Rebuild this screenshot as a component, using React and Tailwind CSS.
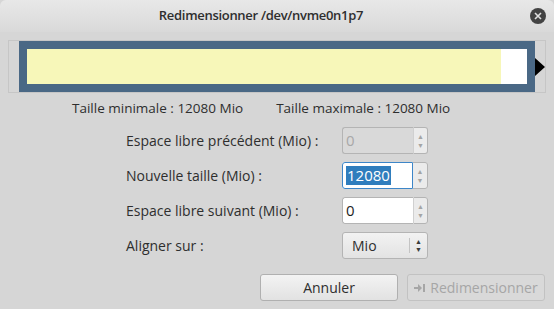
import React from "react";

function SpinBox({ value, disabled, focused, selected }) {
  return (
    <div className={`flex h-[27px] w-[86px] rounded-[3px] ${disabled ? "bg-[#d9d9d9]" : "bg-white"}`}>
      <div
        className={`flex flex-1 items-center rounded-l-[3px] border pl-[3px] ${
          focused ? "border-[#3d86c8]" : "border-[#b4b4b4] border-r-0"
        }`}
      >
        <span
          className={`text-[15px] leading-[19px] ${
            selected ? "bg-[#2f7dbd] px-[1px] text-white" : disabled ? "text-[#a8a8a8]" : "text-[#1e1e1e]"
          }`}
        >
          {value}
        </span>
      </div>
      <div
        className={`flex w-[15px] flex-col items-center justify-center rounded-r-[3px] border border-[#b4b4b4] bg-[#ebebeb] text-[7px] leading-[9px] text-[#a4a4a4] ${
          focused ? "border-l-0" : "border-l-[#d0d0d0]"
        }`}
      >
        <span>▲</span>
        <span>▼</span>
      </div>
    </div>
  );
}

export default function App() {
  return (
    <div
      className="flex h-[309px] w-[554px] flex-col bg-[#d6d6d6] text-[#2e2e2e]"
      style={{ fontFamily: '"Open Sans", "Noto Sans", sans-serif' }}
    >
      {/* title bar */}
      <div className="relative flex h-[32px] items-center justify-center rounded-t-[6px] bg-gradient-to-b from-[#e8e8e8] to-[#d9d9d9] pr-[32px]">
        <span className="text-[13px] font-semibold tracking-[-0.3px] text-[#2e2e2e]">Redimensionner /dev/nvme0n1p7</span>
        <div className="absolute right-[8px] top-[8px] flex h-[16px] w-[16px] items-center justify-center rounded-full bg-[#434343]">
          <svg width="8" height="8" viewBox="0 0 8 8">
            <path d="M1 1L7 7M7 1L1 7" stroke="#e0e0e0" strokeWidth="1.6" />
          </svg>
        </div>
      </div>

      {/* partition graph */}
      <div className="mx-[8px] mt-[8px] flex h-[53px] items-center border border-[#c6c6c6] pl-[10px]">
        <div className="flex h-[51px] w-[516px] bg-[#4a6885] p-[8px]">
          <div className="flex-1 bg-[#f7f7b9]" />
          <div className="w-[26px] bg-white" />
        </div>
        <svg width="10" height="18" viewBox="0 0 10 18">
          <path d="M0 0L10 9L0 18Z" fill="#000" />
        </svg>
      </div>

      <div className="mt-[6px] flex gap-[33px] pl-[72px] text-[13.5px] leading-[18px]">
        <span>Taille minimale : 12080 Mio</span>
        <span>Taille maximale : 12080 Mio</span>
      </div>

      {/* fields */}
      <div className="mt-[10px] flex flex-col gap-[8px] pl-[126px] text-[14px]">
        <div className="flex items-center">
          <span className="w-[216px]">Espace libre précédent (Mio) :</span>
          <SpinBox value="0" disabled />
        </div>
        <div className="flex items-center">
          <span className="w-[216px]">Nouvelle taille (Mio) :</span>
          <SpinBox value="12080" focused selected />
        </div>
        <div className="flex items-center">
          <span className="w-[216px]">Espace libre suivant (Mio) :</span>
          <SpinBox value="0" />
        </div>
        <div className="flex items-center">
          <span className="w-[216px]">Aligner sur :</span>
          <div className="flex h-[27px] w-[86px] rounded-[3px] border border-[#b4b4b4] bg-gradient-to-b from-[#f2f2f2] to-[#e3e3e3]">
            <div className="flex flex-1 items-center pl-[9px] text-[14px]">Mio</div>
            <div className="my-[5px] border-l border-[#c4c4c4]" />
            <div className="flex w-[17px] flex-col items-center justify-center text-[7px] leading-[8px] text-[#3a3a3a]">
              <span>▲</span>
              <span>▼</span>
            </div>
          </div>
        </div>
      </div>

      {/* buttons */}
      <div className="mt-auto mb-[8px] flex justify-end gap-[9px] pr-[9px]">
        <button className="flex h-[27px] w-[138px] items-center justify-center rounded-[3px] border border-[#b0b0b0] bg-gradient-to-b from-[#f3f3f3] to-[#e2e2e2] text-[14px] text-[#2e2e2e]">
          Annuler
        </button>
        <button className="flex h-[27px] w-[138px] items-center justify-center gap-[4px] rounded-[3px] border border-[#c2c2c2] bg-[#d9d9d9] text-[14px] text-[#a6a6a6]">
          <svg width="12" height="10" viewBox="0 0 12 10">
            <path d="M0 4H4V1L8 5L4 9V6H0Z" fill="#a6a6a6" />
            <rect x="9" y="1" width="2" height="8" fill="#a6a6a6" />
          </svg>
          Redimensionner
        </button>
      </div>
    </div>
  );
}
